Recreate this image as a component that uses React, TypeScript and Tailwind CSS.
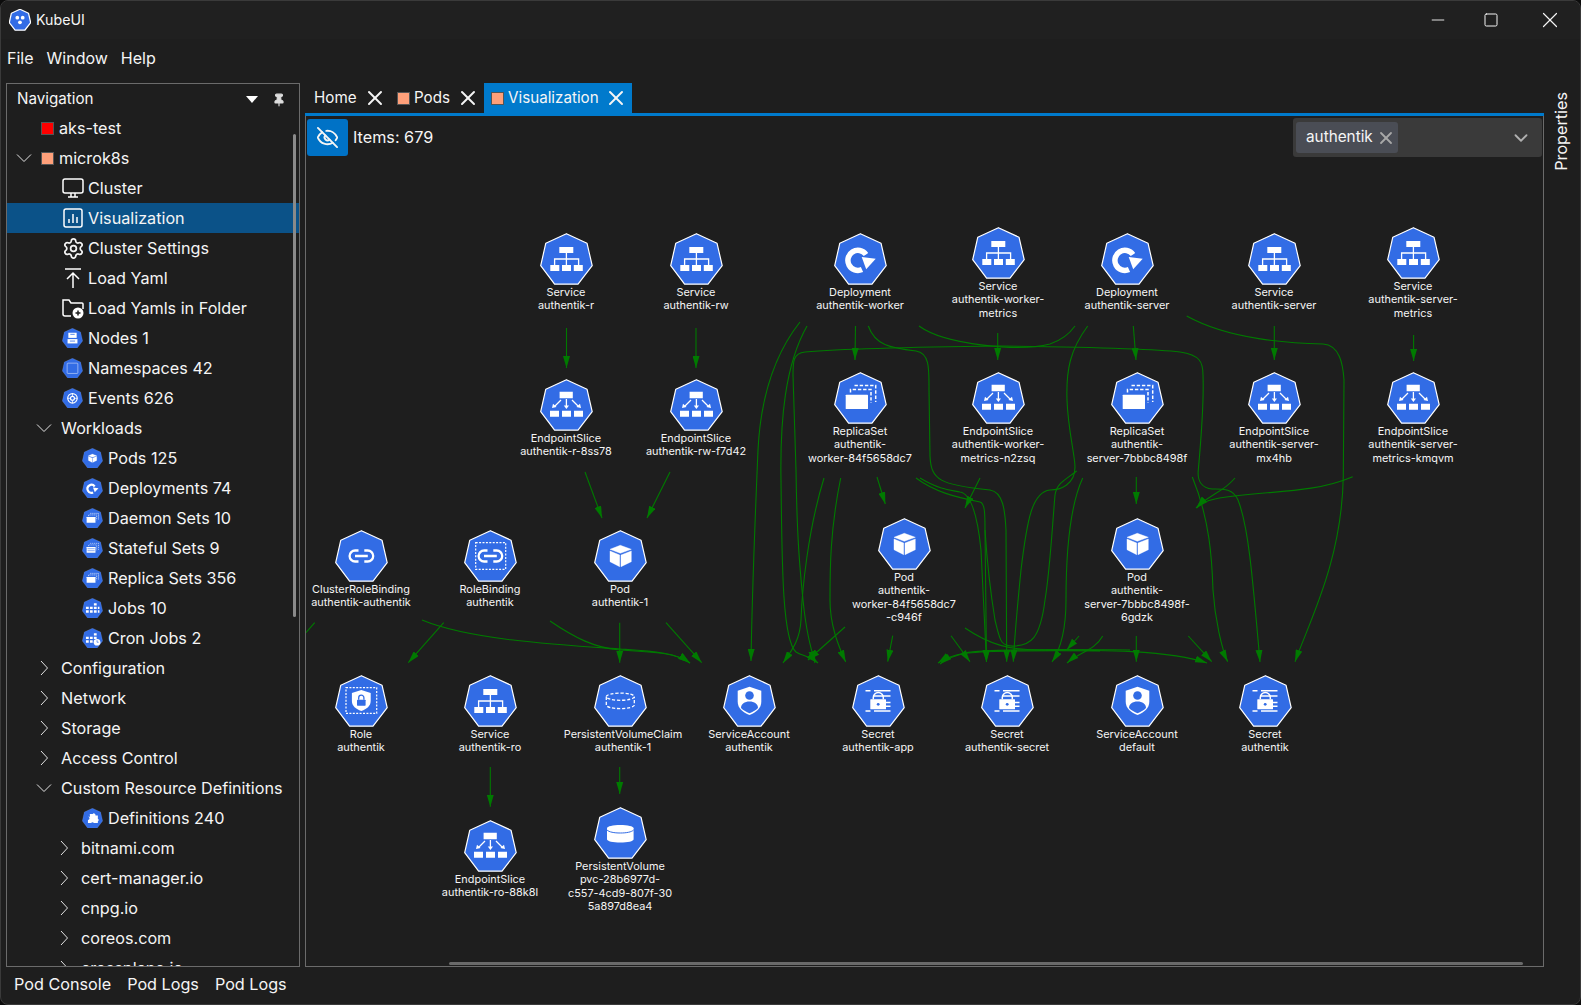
import { ChevronDown, EyeOff, Minus, Pin, Settings, Square, X } from "lucide-react";
import type { ReactNode } from "react";

// ─── Kubernetes glyphs (drawn on a 53 x 52 box) ───────────────────────────

const HEX = "26.4,0.7 47,10.2 52.2,32.7 38,51.2 14.6,51.2 0.7,32.7 5.8,10.2";

function Glyph({ kind }: { kind: string }) {
  switch (kind) {
    case "service":
      return (
        <g>
          <path d="M19.3 14h14v6h-14zM10.3 32h9v6h-9zM22 32h9v6h-9zM33.8 32h9v6h-9z" fill="#fff" />
          <path d="M26.4 20v12M14.6 32v-6h24v6" stroke="#fff" strokeWidth="1.3" fill="none" />
        </g>
      );
    case "endpoint":
      return (
        <g>
          <path d="M19.6 12.7h13.2v6.6H19.6zM10 31.7h9v6h-9zM22 31.7h9v6h-9zM34 31.7h9v6h-9z" fill="#fff" />
          <path d="M26.4 20v8M21 21l-6.5 6.5M32 21l6.5 6.5" stroke="#fff" strokeWidth="1.3" fill="none" />
          <path d="M23.8 26.5h5.2l-2.6 3.6zM13 24.7l3.6 3.2-4.6 1.2zM40 24.7l-3.6 3.2 4.6 1.2z" fill="#fff" />
        </g>
      );
    case "deployment":
      return (
        <g>
          <path d="M32 21.500A10 10 0 1 0 28 36.500" stroke="#fff" strokeWidth="5.500" fill="none" />
          <path d="M27.700 24l14 1.700-9.500 10.500z" fill="#fff" />
        </g>
      );
    case "replicaset":
    case "daemonset":
      return (
        <g>
          <rect x="11.7" y="22.7" width="22.3" height="14.3" rx="0.6" fill="#fff" />
          <path d="M16.5 20.5v-3H37v13.5M20.5 13.5h21.2V30" stroke="#fff" strokeWidth="1.500" strokeDasharray="3.4 1.8" fill="none" />
        </g>
      );
    case "statefulset":
      return (
        <g>
          <rect x="11.7" y="22.7" width="22.3" height="14.3" rx="0.6" fill="#fff" />
          <path d="M14 27h18M14 32h18" stroke="#326ce5" strokeWidth="1.4" />
          <path d="M16.5 20.5v-3H37v13.5M20.5 13.5h21.2V30" stroke="#fff" strokeWidth="1.4" strokeDasharray="3 2" fill="none" />
        </g>
      );
    case "pod":
      return (
        <path
          d="M16 19.3l10.3-4 11 4-11 4zM16 21l9.7 4v11.7L16 31.7zM27 25l10.3-4v10.7L27 36.7z"
          fill="#fff"
          stroke="#fff"
          strokeWidth="0.4"
        />
      );
    case "crb":
    case "rolebinding":
      return (
        <g>
          <path
            d="M23.5 20.5h-3.4a5.5 5.5 0 0 0 0 11h3.4M29.3 20.5h3.4a5.5 5.5 0 0 1 0 11h-3.4M20 26h12.8"
            stroke="#fff"
            strokeWidth="2.3"
            fill="none"
          />
          {kind === "rolebinding" && (
            <rect x="11.7" y="12.7" width="30" height="26.6" stroke="#fff" strokeWidth="1.2" strokeDasharray="2 1.4" fill="none" />
          )}
        </g>
      );
    case "role":
      return (
        <g>
          <rect x="11" y="12.7" width="30.7" height="25.6" stroke="#fff" strokeWidth="1.2" strokeDasharray="2 1.4" fill="none" />
          <path d="M26.3 15l9.4 3v8c0 5-4 8-9.4 10-5.4-2-9.4-5-9.4-10v-8z" fill="#fff" />
          <rect x="22" y="24.7" width="8.6" height="6" rx="0.6" fill="#326ce5" />
          <path d="M23.7 24.7v-2a2.6 2.6 0 0 1 5.2 0v2" stroke="#326ce5" strokeWidth="1.3" fill="none" />
        </g>
      );
    case "account":
      return (
        <g>
          <path d="M26.5 11.7l11.8 4v11c0 6.5-5 10.5-11.8 13.3-6.8-2.8-11.8-6.8-11.8-13.3v-11z" fill="#fff" />
          <circle cx="26.5" cy="20.5" r="4.3" fill="#326ce5" />
          <path d="M18 33c0-4 3.6-6.5 8.5-6.5S35 29 35 33c-2.4 2.4-5.4 4-8.5 5.2C23.4 37 20.4 35.4 18 33z" fill="#326ce5" />
        </g>
      );
    case "secret":
      return (
        <g>
          <path d="M13.5 15.8h5M22 15.8h16.5M22 21h16.5M33.5 27.5h5M33.5 31.3h5M13.5 36h5M22 36h16.5" stroke="#fff" strokeWidth="1.5" fill="none" />
          <rect x="18.3" y="24.3" width="15.7" height="10" rx="0.5" fill="#fff" />
          <path d="M21.3 24.3v-1.8a5 5 0 0 1 10 0v1.8" stroke="#fff" strokeWidth="1.5" fill="none" />
          <circle cx="26.2" cy="29.3" r="1.4" fill="#326ce5" />
        </g>
      );
    case "pvc":
      return (
        <g stroke="#fff" strokeWidth="1.3" strokeDasharray="3.2 1.8" fill="none">
          <ellipse cx="26.3" cy="21.7" rx="14" ry="3.6" />
          <path d="M12.3 21.7v8.3c0 2 6.3 3.6 14 3.6s14-1.6 14-3.6v-8.3" />
        </g>
      );
    case "pv":
      return (
        <g>
          <path d="M13 21.3c0-2 6-3.3 13.3-3.3s13.3 1.3 13.3 3.3v11c0 2-6 3.3-13.3 3.3S13 34.300 13 32.300z" fill="#fff" />
          <path d="M13 23c2 2 7 3 13.300 3s11.300-1 13.300-3" stroke="#326ce5" strokeWidth="1" fill="none" />
        </g>
      );
    case "node":
      return (
        <g fill="#fff">
          <path d="M16 12h21v13H16z" />
          <path d="M14 28h25v11H14z" />
          <path d="M21 16h11M20 33h13" stroke="#326ce5" strokeWidth="2" />
        </g>
      );
    case "namespace":
      return <rect x="13" y="13" width="27" height="26" rx="2" stroke="#c9d8f8" strokeWidth="1.6" fill="none" />;
    case "event":
      return (
        <g stroke="#fff" fill="none">
          <circle cx="26.400" cy="26" r="12" strokeWidth="3" />
          <circle cx="26.400" cy="26" r="5" strokeWidth="3" />
          <path d="M26.400 14v7M26.400 31v7M14.400 26h7M31.400 26h7" strokeWidth="2" />
        </g>
      );
    case "logo":
      return (
        <g fill="#fff">
          <circle cx="20" cy="21" r="4.500" />
          <circle cx="33" cy="21" r="4.500" />
          <circle cx="26.400" cy="32" r="4.500" />
          <circle cx="26.400" cy="25" r="2.500" fill="#326ce5" />
        </g>
      );
    case "job":
    case "cron":
      return (
        <g fill="#fff">
          <path d="M10 22h7v6h-7zM20 22h7v6h-7zM30 22h7v6h-7zM10 31h7v6h-7zM20 31h7v6h-7zM30 31h7v6h-7zM30 13h7v6h-7z" />
          {kind === "job" && <path d="M40 22h4v6h-4zM40 31h4v6h-4z" />}
          {kind === "cron" && <circle cx="38" cy="36" r="8.500" />}
          {kind === "cron" && <path d="M38 31v5h4" stroke="#326ce5" strokeWidth="1.800" fill="none" />}
        </g>
      );
    case "definition":
      return (
        <path
          d="M20 15h7a4 4 0 0 1 7 2v2h6v8a4 4 0 0 1 0 7v4H30a4 4 0 0 0-7 0h-8v-8a4 4 0 0 0 0-8h5v-3a4 4 0 0 1 0-4z"
          fill="#fff"
        />
      );
    default:
      return null;
  }
}

function KubeIcon({ kind, size = 53, outline = size > 30 }: { kind: string; size?: number; outline?: boolean }) {
  return (
    <svg width={size} height={(size * 52) / 53} viewBox="0 0 53 52" className="shrink-0">
      <polygon
        points={HEX}
        fill="#326ce5"
        stroke="#fff"
        strokeWidth={size > 30 ? 1.2 : outline ? 3 : 0.8}
        strokeOpacity={outline ? 1 : 0.35}
        strokeLinejoin="round"
      />
      <Glyph kind={kind} />
    </svg>
  );
}

// ─── Graph data (page coordinates) ────────────────────────────────────────

const NODES: { kind: string; x: number; y: number; lines: string[]; labelClass?: string }[] = [
  { kind: "service", x: 566, y: 233, lines: ["Service", "authentik-r"] },
  { kind: "service", x: 696, y: 233, lines: ["Service", "authentik-rw"] },
  { kind: "deployment", x: 860, y: 233, lines: ["Deployment", "authentik-worker"] },
  { kind: "service", x: 998, y: 227, lines: ["Service", "authentik-worker-", "metrics"] },
  { kind: "deployment", x: 1127, y: 233, lines: ["Deployment", "authentik-server"] },
  { kind: "service", x: 1274, y: 233, lines: ["Service", "authentik-server"] },
  { kind: "service", x: 1413, y: 227, lines: ["Service", "authentik-server-", "metrics"] },
  { kind: "endpoint", x: 566, y: 379, lines: ["EndpointSlice", "authentik-r-8ss78"] },
  { kind: "endpoint", x: 696, y: 379, lines: ["EndpointSlice", "authentik-rw-f7d42"] },
  { kind: "replicaset", x: 860, y: 372, lines: ["ReplicaSet", "authentik-", "worker-84f5658dc7"] },
  { kind: "endpoint", x: 998, y: 372, lines: ["EndpointSlice", "authentik-worker-", "metrics-n2zsq"] },
  { kind: "replicaset", x: 1137, y: 372, lines: ["ReplicaSet", "authentik-", "server-7bbbc8498f"] },
  { kind: "endpoint", x: 1274, y: 372, lines: ["EndpointSlice", "authentik-server-", "mx4hb"] },
  { kind: "endpoint", x: 1413, y: 372, lines: ["EndpointSlice", "authentik-server-", "metrics-kmqvm"] },
  { kind: "crb", x: 361, y: 530, lines: ["ClusterRoleBinding", "authentik-authentik"] },
  { kind: "rolebinding", x: 490, y: 530, lines: ["RoleBinding", "authentik"] },
  { kind: "pod", x: 620, y: 530, lines: ["Pod", "authentik-1"] },
  { kind: "pod", x: 904, y: 518, lines: ["Pod", "authentik-", "worker-84f5658dc7", "-c946f"] },
  { kind: "pod", x: 1137, y: 518, lines: ["Pod", "authentik-", "server-7bbbc8498f-", "6gdzk"] },
  { kind: "role", x: 361, y: 675, lines: ["Role", "authentik"] },
  { kind: "service", x: 490, y: 675, lines: ["Service", "authentik-ro"] },
  { kind: "pvc", x: 620, y: 675, lines: ["PersistentVolumeClaim", "authentik-1"], labelClass: "ml-[6px]" },
  { kind: "account", x: 749, y: 675, lines: ["ServiceAccount", "authentik"] },
  { kind: "secret", x: 878, y: 675, lines: ["Secret", "authentik-app"] },
  { kind: "secret", x: 1007, y: 675, lines: ["Secret", "authentik-secret"] },
  { kind: "account", x: 1137, y: 675, lines: ["ServiceAccount", "default"] },
  { kind: "secret", x: 1265, y: 675, lines: ["Secret", "authentik"] },
  { kind: "endpoint", x: 490, y: 820, lines: ["EndpointSlice", "authentik-ro-88k8l"] },
  { kind: "pv", x: 620, y: 807, lines: ["PersistentVolume", "pvc-28b6977d-", "c557-4cd9-807f-30", "5a897d8ea4"] },
];

const ARROWS = [
  "M566.500 328V368",
  "M696 328V368",
  "M585 472L602 518",
  "M670 472L647 518",
  "M855.500 326L855 360",
  "M997.700 333V360",
  "M1133.300 326L1136 360",
  "M1274.300 326V360",
  "M1413.600 335V361",
  "M877 477L885.300 504",
  "M1136.300 477V504",
  "M443.700 622.700L408.300 662.700",
  "M422 620C470 640 560 645 620 649C650 651 675 652 690 663",
  "M550 621C575 638 595 648 620 650C650 652 675 652 690 663",
  "M619.700 622.700V662.700",
  "M666 622.700L701.700 662.700",
  "M490.300 767V806.700",
  "M619.700 767V794",
  "M800 322C770 360 760 410 758 450C755 520 752 600 751 661",
  "M807 326C785 365 780 420 781 480C782 560 782 640 796 652C802 656 810 656 818 663",
  "M1000 346C920 347 840 349 805 352C793 353 793 362 793 375L796 470C797 540 800 570 803 600C806 630 810 645 815 663",
  "M1000 346C1080 347 1150 348 1180 352C1200 355 1203 362 1203 375C1204 400 1201 440 1198.300 470C1197 482 1203 488 1212 489C1222 489 1233 488 1238 500C1248 525 1252 570 1260 662",
  "M868.300 326C875 345 890 348 916 351C930 353 929 370 929 390L930 456C931 480 940 485 990 490C1003 492 1005 510 1006 530L1006.700 661.700",
  "M1087.700 326C1070 350 1066 370 1067 400C1068 430 1075 455 1075 467C1075 485 1060 490 1050 490C1032 492 1027 520 1021 570C1018 600 1015 630 1013.300 661.700",
  "M1082.700 478C1068 510 1066 560 1066 600C1066 630 1060 650 1052 662",
  "M824 478C808 530 802 590 801 620C800 640 792 650 783 663",
  "M840.700 478C830 530 830 570 830 600C830 625 838 645 845.700 662",
  "M845 627L808 660",
  "M892.700 635.700L887.700 661.700",
  "M951 635.700L970 661.700",
  "M980 478L965 508",
  "M916 478C935 492 955 497 980 502C985 503 985 515 985 530L986.500 662",
  "M920 478C940 490 950 490 960 492C972 494 978 520 981 550L986.500 662",
  "M1130 650C1050 649 980 650 965 653C955 655 945 658 938 663",
  "M1100 651C1050 650 985 651 968 653C956 655 946 659 940 664",
  "M965 628C990 645 1010 650 1040 650C1100 650 1170 650 1207 663",
  "M1079 636L1066.700 650",
  "M1102.700 636C1095 650 1080 652 1067 663",
  "M1136.300 636V661.700",
  "M1188.300 636L1211.700 661.700",
  "M1192.300 477C1210 520 1212 560 1213 590C1215 620 1222 650 1227.700 661.700",
  "M1186.700 316C1230 340 1290 343 1323 344C1340 345 1343 365 1344 380L1343.300 476C1342 560 1310 620 1295 661.700",
  "M1235 478C1220 495 1215 490 1196 508",
  "M1352.700 476.700C1310 495 1260 490 1215 499C1205 501 1200 504 1196.700 508",
];

const PLAIN_EDGES = [
  "M314.700 622.700L306 632.700",
  "M919 326C945 345 1020 352 1050 344C1062 340 1070 333 1075 326",
  "M1076.700 471C1065 480 1057 483 1055 495C1052 530 1050 570 1045 600C1040 640 1030 645 1015 646C1000 647 1000 640 995 620C990 590 987 560 985 530",
];

// ─── Navigation tree ──────────────────────────────────────────────────────

function TreeChevron({ open }: { open: boolean }) {
  return (
    <svg width="20" height="16" viewBox="0 0 20 16" fill="none" stroke="#e4e4e4" strokeWidth="1">
      {open ? <path d="M3 4.500l7 7 7-7" /> : <path d="M7 1l6.500 7L7 15" />}
    </svg>
  );
}

function Row({
  indent,
  chevron,
  selected,
  children,
}: {
  indent: string;
  chevron?: "open" | "closed";
  selected?: boolean;
  children: ReactNode;
}) {
  return (
    <div className={`flex h-[30px] shrink-0 items-center ${indent} ${selected ? "bg-[#0b5288]" : ""}`}>
      <span className="flex w-5 shrink-0 justify-center">{chevron && <TreeChevron open={chevron === "open"} />}</span>
      {children}
    </div>
  );
}

function Swatch({ color }: { color: string }) {
  return <span className={`mr-[5px] ml-[7px] h-[13px] w-[13px] shrink-0 border border-[#555] ${color}`} />;
}

function LineIcon({ children }: { children: ReactNode }) {
  return (
    <svg width="22" height="22" viewBox="0 0 22 22" fill="none" stroke="#fff" strokeWidth="1.500" className="mr-1 ml-2 shrink-0">
      {children}
    </svg>
  );
}

function KubeRow({ indent, kind, label }: { indent: string; kind: string; label: string }) {
  return (
    <Row indent={indent}>
      <span className="mr-[5px] ml-2 flex">
        <KubeIcon kind={kind} size={21} />
      </span>
      {label}
    </Row>
  );
}

function GroupRow({ indent, open, label }: { indent: string; open: boolean; label: string }) {
  return (
    <Row indent={indent} chevron={open ? "open" : "closed"}>
      <span className="ml-[7px]">{label}</span>
    </Row>
  );
}

function Navigation() {
  return (
    <div className="relative ml-[5px] flex w-[294px] shrink-0 flex-col overflow-hidden border border-[#6b6b6b] text-[16.200px]">
      <div className="flex h-[29px] shrink-0 items-center pt-0.5 pr-[13px] pl-2.5 text-[15.200px]">
        <span>Navigation</span>
        <svg width="12" height="7" viewBox="0 0 12 7" className="mr-[14px] ml-auto">
          <path d="M0 0h12L6 7z" fill="#fff" />
        </svg>
        <Pin size={14} fill="#ddd" stroke="#ddd" />
      </div>
      <Row indent="pl-[7px]">
        <Swatch color="bg-[#ff0000]" />
        aks-test
      </Row>
      <Row indent="pl-[7px]" chevron="open">
        <Swatch color="bg-[#ffa07a]" />
        microk8s
      </Row>
      <Row indent="pl-[27px]">
        <LineIcon>
          <rect x="1" y="2" width="20" height="14" rx="2" />
          <path d="M6 20h10M9 16v4M13 16v4" />
        </LineIcon>
        Cluster
      </Row>
      <Row indent="pl-[27px]" selected>
        <LineIcon>
          <rect x="2" y="2" width="18" height="18" rx="2" />
          <path d="M7 16v-4M11 16V7M15 16v-6" />
        </LineIcon>
        Visualization
      </Row>
      <Row indent="pl-[27px]">
        <span className="mr-[3px] ml-2 flex">
          <Settings size={23} strokeWidth={1.800} />
        </span>
        Cluster Settings
      </Row>
      <Row indent="pl-[27px]">
        <LineIcon>
          <path d="M3 2h16M11 21V6M5 12l6-6 6 6" />
        </LineIcon>
        Load Yaml
      </Row>
      <Row indent="pl-[27px]">
        <LineIcon>
          <path d="M9 19H3a2 2 0 0 1-2-2V3h6l2 3h11a1 1 0 0 1 1 1v5" />
          <circle cx="16" cy="16" r="5.500" fill="#fff" stroke="none" />
          <path d="M16 13.500v5M13.500 16h5" stroke="#1e1e1e" />
        </LineIcon>
        Load Yamls in Folder
      </Row>
      <KubeRow indent="pl-[27px]" kind="node" label="Nodes 1" />
      <KubeRow indent="pl-[27px]" kind="namespace" label="Namespaces 42" />
      <KubeRow indent="pl-[27px]" kind="event" label="Events 626" />
      <GroupRow indent="pl-[27px]" open label="Workloads" />
      <KubeRow indent="pl-[47px]" kind="pod" label="Pods 125" />
      <KubeRow indent="pl-[47px]" kind="deployment" label="Deployments 74" />
      <KubeRow indent="pl-[47px]" kind="daemonset" label="Daemon Sets 10" />
      <KubeRow indent="pl-[47px]" kind="statefulset" label="Stateful Sets 9" />
      <KubeRow indent="pl-[47px]" kind="replicaset" label="Replica Sets 356" />
      <KubeRow indent="pl-[47px]" kind="job" label="Jobs 10" />
      <KubeRow indent="pl-[47px]" kind="cron" label="Cron Jobs 2" />
      <GroupRow indent="pl-[27px]" open={false} label="Configuration" />
      <GroupRow indent="pl-[27px]" open={false} label="Network" />
      <GroupRow indent="pl-[27px]" open={false} label="Storage" />
      <GroupRow indent="pl-[27px]" open={false} label="Access Control" />
      <GroupRow indent="pl-[27px]" open label="Custom Resource Definitions" />
      <KubeRow indent="pl-[47px]" kind="definition" label="Definitions 240" />
      <GroupRow indent="pl-[47px]" open={false} label="bitnami.com" />
      <GroupRow indent="pl-[47px]" open={false} label="cert-manager.io" />
      <GroupRow indent="pl-[47px]" open={false} label="cnpg.io" />
      <GroupRow indent="pl-[47px]" open={false} label="coreos.com" />
      <GroupRow indent="pl-[47px]" open={false} label="crossplane.io" />
      {/* Scrollbar */}
      <div className="absolute top-[50px] right-[3px] h-[483px] w-[3px] rounded-full bg-[#8a8a8a]" />
    </div>
  );
}

// ─── Tabs and graph ───────────────────────────────────────────────────────

function Tabs() {
  return (
    <div className="flex h-[30px] shrink-0 items-stretch text-[15.200px]">
      <div className="flex w-[87px] items-center pr-[5px] pl-[9px]">
        Home
        <X size={24} strokeWidth={2} className="ml-auto" />
      </div>
      <div className="flex w-[92px] items-center gap-1 pr-1 pl-[5px]">
        <span className="h-[13px] w-[13px] border border-[#555] bg-[#ffa07a]" />
        Pods
        <X size={24} strokeWidth={2} className="ml-auto" />
      </div>
      <div className="flex w-[148px] items-center gap-1 bg-[#007acc] pr-1 pl-[7px]">
        <span className="h-[13px] w-[13px] border border-[#555] bg-[#ffa07a]" />
        Visualization
        <X size={24} strokeWidth={2} className="ml-auto" />
      </div>
    </div>
  );
}

function Graph() {
  return (
    <div className="relative flex-1 overflow-hidden border-x border-b border-[#6b6b6b]">
      <svg width="1237" height="850" className="absolute inset-0">
        <defs>
          <marker id="head" markerWidth="12" markerHeight="7" refX="12" refY="3.500" orient="auto" markerUnits="userSpaceOnUse">
            <path d="M0 0L12 3.500L0 7z" fill="#007a00" />
          </marker>
        </defs>
        <g transform="translate(-306 -116)" fill="none" stroke="#007a00" strokeWidth="1.100">
          {ARROWS.map((d) => (
            <path key={d} d={d} markerEnd="url(#head)" />
          ))}
          {PLAIN_EDGES.map((d) => (
            <path key={d} d={d} />
          ))}
        </g>
      </svg>

      {NODES.map((n) => (
        <div
          key={n.lines.join("/") + n.x}
          className="absolute flex w-[140px] flex-col items-center text-center text-[10.900px] leading-[13.300px]"
          style={{ left: n.x - 306 - 70, top: n.y - 116 }}
        >
          <KubeIcon kind={n.kind} />
          <div className={`mt-[1px] ${n.labelClass ?? ""}`}>
            {n.lines.map((line) => (
              <div key={line}>{line}</div>
            ))}
          </div>
        </div>
      ))}

      {/* Toolbar */}
      <div className="relative flex items-center pt-0.5 pl-px">
        <div className="flex h-[37px] w-[41px] items-center justify-center rounded-[3px] bg-[#0072c6]">
          <EyeOff size={23} strokeWidth={2} />
        </div>
        <span className="ml-[5px] text-[16.200px]">Items: 679</span>
        <div className="mr-px ml-auto flex h-[39px] w-[249px] items-center rounded-[3px] bg-[#3a3a3a] pl-[3px] text-[15.300px]">
          <div className="flex h-[31px] w-[102px] items-center rounded-[3px] bg-[#4a4d55] pl-2.5">
            authentik
            <X size={20} strokeWidth={2.200} className="ml-[3px] text-[#a8a8a8]" />
          </div>
          <ChevronDown size={22} strokeWidth={2} className="mr-2.5 ml-auto text-[#b0b0b0]" />
        </div>
      </div>

      {/* Horizontal scrollbar */}
      <div className="absolute bottom-[1px] left-[143px] h-[3px] w-[1074px] rounded-full bg-[#6a6a6a]" />
    </div>
  );
}

export default function App() {
  return (
    <div className="h-[1005px] w-[1581px] overflow-hidden bg-[#0c0c0c] font-['Inter',sans-serif] text-[16px] text-[#f5f5f5]">
      <div className="flex h-full flex-col overflow-hidden rounded-lg border border-[#3a3a3a] bg-[#1e1e1e]">
        {/* Title bar */}
        <div className="flex h-[38px] shrink-0 items-center bg-[#202020] pl-[8px] text-[14.200px]">
          <KubeIcon kind="logo" size={22} outline />
          <span className="ml-[5px]">KubeUI</span>
          <div className="ml-auto flex items-center">
            <Minus size={20} strokeWidth={1.100} />
            <Square size={16} strokeWidth={1.500} className="ml-[35px]" />
            <X size={26} strokeWidth={1.100} className="mr-[17px] ml-[38px]" />
          </div>
        </div>

        {/* Menu */}
        <div className="flex h-[44px] shrink-0 items-center gap-[13px] pb-[7px] pl-1.5">
          <span>File</span>
          <span>Window</span>
          <span>Help</span>
        </div>

        <div className="flex h-[884px] shrink-0">
          <Navigation />
          <div className="ml-[5px] flex w-[1239px] shrink-0 flex-col">
            <Tabs />
            <div className="h-[3px] shrink-0 bg-[#007acc]" />
            <Graph />
          </div>
          <div className="flex-1 pt-[9px] pl-[5px] text-[16.200px]">
            <span className="rotate-180 [writing-mode:vertical-rl]">Properties</span>
          </div>
        </div>

        {/* Bottom tabs */}
        <div className="flex flex-1 items-center gap-4 pb-[3px] pl-[13px] text-[16.200px]">
          <span>Pod Console</span>
          <span>Pod Logs</span>
          <span>Pod Logs</span>
        </div>
      </div>
    </div>
  );
}
